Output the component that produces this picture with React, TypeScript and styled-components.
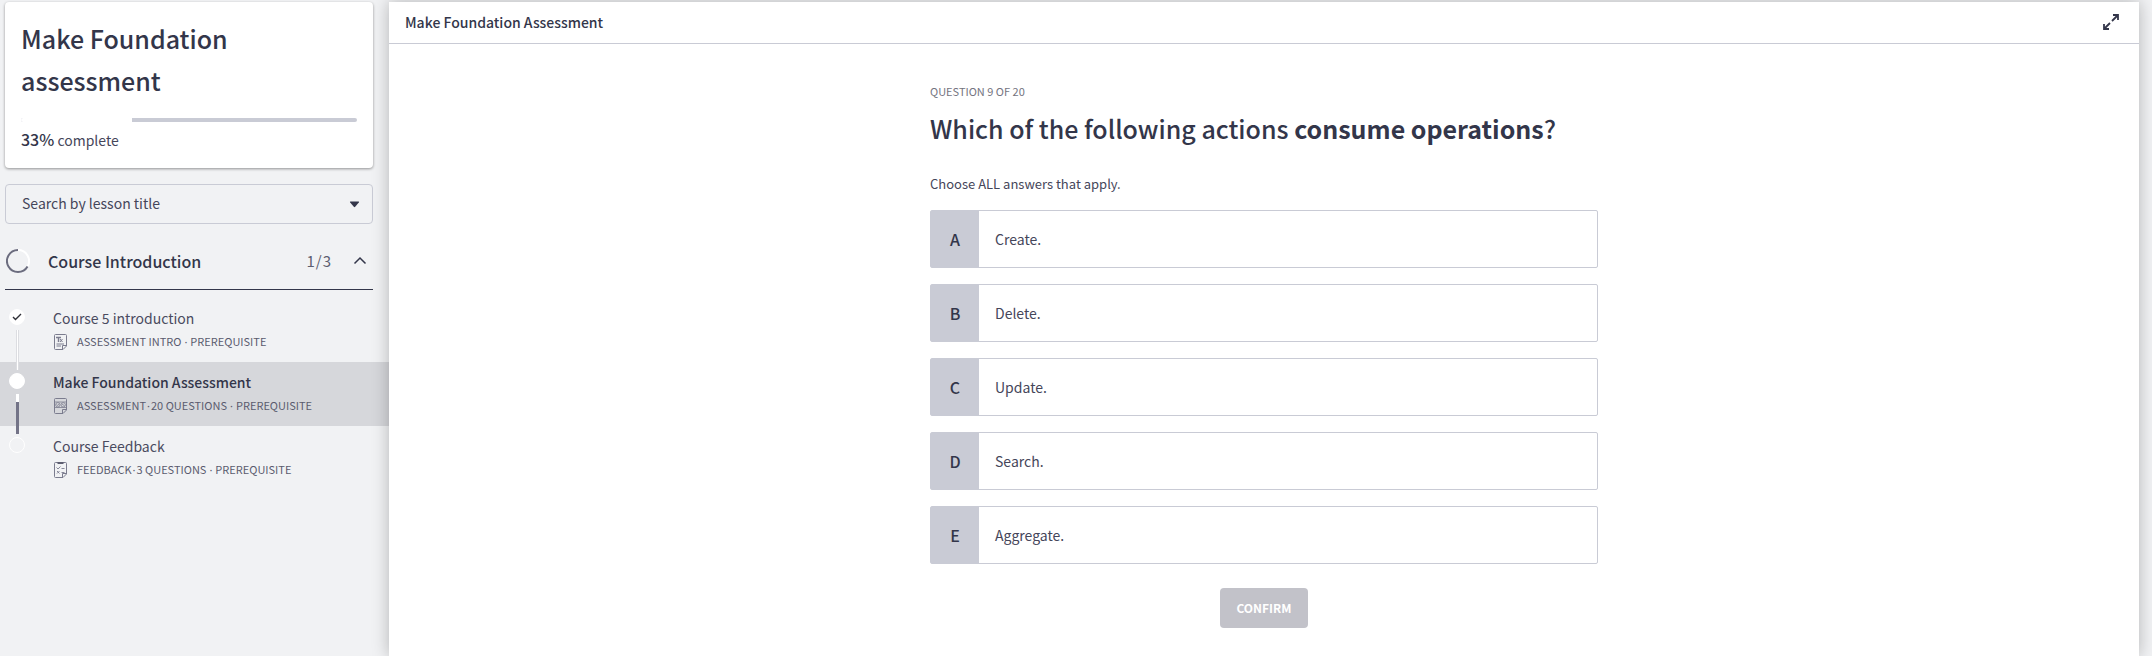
import { useState } from 'react';
import styled, { createGlobalStyle } from 'styled-components';

const ink = '#33364a';
const line = '#c9cbd5';

const GlobalStyle = createGlobalStyle`
  *, *::before, *::after { box-sizing: border-box; }
  body {
    margin: 0;
    background: #f1f2f4;
    color: ${ink};
    font-family: "Noto Sans CJK SC", "Noto Sans", sans-serif;
    font-size: 14px;
    line-height: 20px;
  }
  button, input { font: inherit; color: inherit; }
  h1, h2, h3, p, ul, fieldset { margin: 0; padding: 0; border: 0; list-style: none; }
`;

const Page = styled.div`
  display: flex;
  min-height: 100vh;
  padding: 2px 13px 0 0;
`;

const Sidebar = styled.aside`
  flex: 0 0 389px;
`;

const SidebarTop = styled.div`
  display: flex;
  flex-direction: column;
  gap: 16px;
  padding: 0 16px 0 5px;
`;

const CourseCard = styled.section`
  height: 166px;
  padding: 15px 16px;
  background: #fff;
  border-radius: 4px;
  box-shadow: 0 1px 3px rgba(0, 0, 0, 0.4);
`;

const CourseTitle = styled.h1`
  width: 240px;
  font-size: 25px;
  line-height: 42px;
  font-weight: 500;
`;

const Track = styled.div`
  height: 4px;
  margin: 17px 0 5px;
  border-radius: 2px;
  background: ${line};
  overflow: hidden;
`;

const TrackFill = styled.div`
  height: 100%;
  background: #fff;
`;

const Complete = styled.p`
  line-height: 24px;
  color: #45465a;
  strong { font-size: 16px; font-weight: 500; color: ${ink}; }
`;

const SearchBox = styled.div`
  display: flex;
  align-items: center;
  height: 40px;
  padding: 0 12px 0 16px;
  border: 1px solid ${line};
  border-radius: 4px;
`;

const SearchInput = styled.input`
  flex: 1;
  min-width: 0;
  padding: 0 0 2px;
  border: 0;
  outline: 0;
  background: none;
  &::placeholder { color: #45465a; opacity: 1; }
`;

const IconButton = styled.button`
  display: flex;
  align-items: center;
  justify-content: center;
  padding: 0;
  border: 0;
  background: none;
  cursor: pointer;
`;

const SectionHeader = styled.button`
  display: flex;
  align-items: center;
  width: 100%;
  height: 50px;
  padding: 0 6px 8px 1px;
  border: 0;
  border-bottom: 1px solid ${ink};
  background: none;
  text-align: left;
`;

const SectionName = styled.span`
  flex: 1;
  margin-left: 18px;
  font-size: 16px;
  font-weight: 500;
`;

const SectionCount = styled.span`
  margin-right: 21px;
  font-size: 15px;
  letter-spacing: 1px;
  color: #5d5e70;
`;

const Lessons = styled.ul`
  padding-top: 8px;
`;

const Lesson = styled.li<{ $active?: boolean }>`
  display: flex;
  height: 64px;
  padding: 10px 16px 0 9px;
  background: ${(p) => (p.$active ? '#d6d7db' : 'none')};
`;

const Rail = styled.div`
  position: relative;
  z-index: 1;
  display: flex;
  flex: 0 0 16px;
  flex-direction: column;
  align-items: center;
  gap: 5px;
  margin: 1px 28px -8px 0;
`;

const Marker = styled.span<{ $filled: boolean }>`
  display: flex;
  align-items: center;
  justify-content: center;
  flex: 0 0 16px;
  width: 16px;
  border: 1px solid #fff;
  border-radius: 50%;
  background: ${(p) => (p.$filled ? '#fff' : 'none')};
`;

const Connector = styled.span<{ $done: boolean }>`
  flex: 1;
  width: 3px;
  border: solid #dcdde1;
  border-width: 0 1px;
  background: #fff;
  ${(p) => !p.$done && `
    border: 0;
    background: linear-gradient(#fff 20%, #737387 20%);
  `}
`;

const LessonLink = styled.a`
  display: flex;
  flex-direction: column;
  gap: 5px;
  color: inherit;
  text-decoration: none;
`;

const LessonTitle = styled.span<{ $active?: boolean }>`
  font-weight: ${(p) => (p.$active ? 500 : 400)};
  color: ${(p) => (p.$active ? ink : '#4a4b60')};
`;

const LessonMeta = styled.span`
  display: flex;
  align-items: center;
  gap: 9px;
  font-size: 11px;
  line-height: 16px;
  color: #5a5b6e;
`;

const Dot = styled.span<{ $wide?: boolean }>`
  margin: 0 ${(p) => (p.$wide ? 3 : 1)}px;
  font-family: "Noto Sans", sans-serif;
`;

const Main = styled.main`
  position: relative;
  z-index: 2;
  flex: 1;
  min-width: 0;
  background: #fff;
  box-shadow: 0 0 16px rgba(0, 0, 0, 0.26);
`;

const MainHeader = styled.header`
  display: flex;
  align-items: center;
  justify-content: space-between;
  height: 42px;
  padding: 0 19px 2px 16px;
  border-bottom: 1px solid ${line};
`;

const MainTitle = styled.h2`
  font-size: 14px;
  font-weight: 500;
`;

const Question = styled.form`
  max-width: 668px;
  margin: 0 auto;
  padding: 39px 0 28px;
`;

const Counter = styled.p`
  font-size: 11px;
  line-height: 16px;
  color: #737480;
`;

const Prompt = styled.h3`
  margin: 9px 0 26px;
  font-size: 25px;
  line-height: 40px;
  font-weight: 500;
`;

const Answers = styled.fieldset`
  display: flex;
  flex-direction: column;
  gap: 16px;
`;

const Hint = styled.p`
  margin-bottom: 16px;
  font-size: 13px;
  color: #45465a;
`;

const Answer = styled.label`
  display: flex;
  align-items: center;
  height: 58px;
  border: 1px solid ${line};
  border-radius: 2px;
  color: #45465a;
  cursor: pointer;
`;

const Tick = styled.input`
  appearance: none;
  width: 0;
  margin: 0;
`;

const Letter = styled.span`
  display: flex;
  align-items: center;
  justify-content: center;
  align-self: stretch;
  width: 48px;
  margin-right: 16px;
  background: ${line};
  color: ${ink};
  font-size: 16px;
  font-weight: 500;
`;

const Confirm = styled.button`
  display: block;
  height: 40px;
  margin: 24px auto 0;
  padding: 0 16px;
  border: 0;
  border-radius: 4px;
  background: #c2c2c9;
  color: #fff;
  font-size: 12px;
  font-weight: 700;
`;

const Sheet = ({ kind }: { kind: string }) => (
  <svg width="15" height="16" viewBox="0 0 15 16" fill="none" stroke="#7b7c8e" strokeWidth="1" strokeLinejoin="round" aria-hidden="true">
    <path d="M2.500 0.500H12.500Q13.500 0.500 13.500 1.500V12L10 15.500H2.500Q1.500 15.500 1.500 14.500V1.500Q1.500 0.500 2.500 0.500ZM13.500 11.500H9.500V15.500" />
    {kind === 'intro' && (
      <g>
        <path d="M3 3.500H8M5.500 3.500V8" strokeWidth="1.400" />
        <path d="M7 5L9.500 8M9.500 5L7 8M3.500 10H11M3.500 12H8" />
      </g>
    )}
    {kind === 'quiz' && (
      <g strokeWidth="0.800">
        <path d="M1.500 4H13.500M1.500 9.500H13.500M3.500 6.500L4.800 7.500L6 6M9 6L11.500 7.800" />
        <circle cx="4.800" cy="6.800" r="2.200" />
        <circle cx="10.200" cy="6.800" r="2.200" />
      </g>
    )}
    {kind === 'feedback' && (
      <g strokeWidth="0.900">
        <path d="M4.500 1H10.500" strokeWidth="2" stroke="#5d5e70" />
        <path d="M3.500 5.500L5 7L7.500 4.500M4 9L6.500 11.500M6.500 9L4 11.500M8.500 6.500H11.500M8.500 10.500H11.500" />
      </g>
    )}
  </svg>
);

const lessons = [
  { title: 'Course 5 introduction', type: 'ASSESSMENT INTRO', kind: 'intro', state: 'done' },
  { title: 'Make Foundation Assessment', type: 'ASSESSMENT', count: '20 QUESTIONS', kind: 'quiz', state: 'active' },
  { title: 'Course Feedback', type: 'FEEDBACK', count: '3 QUESTIONS', kind: 'feedback', state: 'todo' },
];

const answers = ['Create.', 'Delete.', 'Update.', 'Search.', 'Aggregate.'];

export default function App() {
  const [open, setOpen] = useState(true);
  const progress = 33;
  return (
    <>
      <GlobalStyle />
      <Page>
        <Sidebar>
          <SidebarTop>
            <CourseCard>
              <CourseTitle>Make Foundation assessment</CourseTitle>
              <Track>
                <TrackFill style={{ width: `${progress}%` }} />
              </Track>
              <Complete><strong>{progress}%</strong> complete</Complete>
            </CourseCard>
            <SearchBox>
              <SearchInput aria-label="Search by lesson title" placeholder="Search by lesson title" />
              <IconButton type="button" aria-label="Show lessons">
                <svg width="11" height="7" viewBox="0 0 11 7" fill={ink}><path d="M1.500 0.500H9.500Q10.500 0.500 9.800 1.500L6.200 5.800Q5.500 6.500 4.800 5.800L1.200 1.500Q0.500 0.500 1.500 0.500Z" /></svg>
              </IconButton>
            </SearchBox>
            <SectionHeader type="button" aria-expanded={open} onClick={() => setOpen(!open)}>
              <svg width="24" height="24" viewBox="0 0 24 24" fill="none" strokeWidth="2">
                <path d="M12 1A11 11 0 0 1 21.530 17.500" stroke="#fff" />
                <path d="M12 1A11 11 0 1 0 21.530 17.500" stroke="#6b6c7e" />
              </svg>
              <SectionName>Course Introduction</SectionName>
              <SectionCount>1/3</SectionCount>
              <svg width="14" height="9" viewBox="0 0 14 9" fill="none" stroke={ink} strokeWidth="1.500"><path d="M1.500 7.500L7 2L12.500 7.500" /></svg>
            </SectionHeader>
          </SidebarTop>
          {open && (
            <Lessons>
              {lessons.map(({ title, type, count, kind, state }) => (
                <Lesson key={title} $active={state === 'active'}>
                  <Rail>
                    <Marker $filled={state !== 'todo'}>
                      {state === 'done' && (
                        <svg width="10" height="8" viewBox="0 0 10 8" fill="none" stroke="#2f3038" strokeWidth="1.400"><path d="M1 4L3.500 6.500L9 1" /></svg>
                      )}
                    </Marker>
                    {state !== 'todo' && <Connector $done={state === 'done'} />}
                  </Rail>
                  <LessonLink href="#lesson">
                    <LessonTitle $active={state === 'active'}>{title}</LessonTitle>
                    <LessonMeta>
                      <Sheet kind={kind} />
                      <span>
                        {type}
                        {count && <><Dot>·</Dot>{count}</>}
                        <Dot $wide>·</Dot>PREREQUISITE
                      </span>
                    </LessonMeta>
                  </LessonLink>
                </Lesson>
              ))}
            </Lessons>
          )}
        </Sidebar>
        <Main>
          <MainHeader>
            <MainTitle>Make Foundation Assessment</MainTitle>
            <IconButton type="button" aria-label="Full screen">
              <svg width="18" height="18" viewBox="0 0 18 18" fill="none" stroke={ink} strokeWidth="1.800">
                <path d="M11 2H16V7M16 2L10 8M7 16H2V11M2 16L8 10" />
              </svg>
            </IconButton>
          </MainHeader>
          <Question onSubmit={(e) => e.preventDefault()}>
            <Counter>QUESTION 9 OF 20</Counter>
            <Prompt>Which of the following actions <b>consume operations</b>?</Prompt>
            <Hint id="hint">Choose ALL answers that apply.</Hint>
            <Answers aria-labelledby="hint">
              {answers.map((text, i) => (
                <Answer key={text}>
                  <Tick type="checkbox" name="answer" value={text} />
                  <Letter>{'ABCDE'[i]}</Letter>
                  {text}
                </Answer>
              ))}
            </Answers>
            <Confirm type="submit" disabled>CONFIRM</Confirm>
          </Question>
        </Main>
      </Page>
    </>
  );
}
